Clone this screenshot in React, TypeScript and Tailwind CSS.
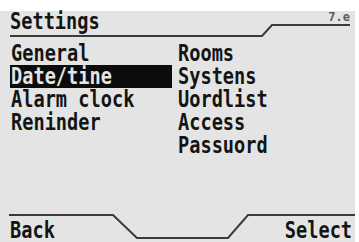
import React from "react";

const left = ["General", "Date/tine", "Alarm clock", "Reninder"];
const right = ["Rooms", "Systens", "Uordlist", "Access", "Passuord"];

function Label({ text, right: alignRight }: { text: string; right?: boolean }) {
    return (
        <span
            className={`block w-max h-[23px] leading-[23px] whitespace-pre scale-x-[0.81] ${alignRight ? "origin-right ml-auto" : "origin-left"}`}
        >
            {text}
        </span>
    );
}

export default function App() {
    return (
        <div
            className="w-[359px] h-[242px] bg-white overflow-hidden text-[#141414] font-bold"
            style={{ fontFamily: '"DejaVu Sans Mono", "Liberation Mono", monospace' }}
        >
            <div className="relative mt-[11px] w-[355px] h-[231px] bg-[#e4e4e4] flex flex-col">
                {/* frame lines */}
                <svg className="absolute left-0 top-0 pointer-events-none" width="355" height="231" viewBox="0 11 355 231">
                    <polyline
                        points="10,36 262,36 272,25 350,25"
                        fill="none"
                        stroke="#3a3a3a"
                        strokeWidth="2"
                    />
                    <polyline
                        points="9,215 113,215 137,238 228,238 248,215 355,215"
                        fill="none"
                        stroke="#3a3a3a"
                        strokeWidth="2"
                    />
                </svg>

                {/* header */}
                <div className="flex justify-between items-start -mt-[1px] pl-[10px] pr-[5px]">
                    <div className="text-[23px]">
                        <Label text="Settings" />
                    </div>
                    <div className="text-[12px] leading-[12px] text-[#5a5a5a] mt-[1px]">7.e</div>
                </div>

                {/* menu */}
                <div className="flex mt-[9px] pl-[10px] text-[23px]">
                    <div className="w-[162px] flex flex-col">
                        {left.map((item) => (
                            <div
                                key={item}
                                className={`h-[23px] pl-[1px] ${item === "Date/tine" ? "bg-[#0c0c0c] text-[#e4e4e4]" : ""}`}
                            >
                                <Label text={item} />
                            </div>
                        ))}
                    </div>
                    <div className="ml-[6px] flex flex-col">
                        {right.map((item) => (
                            <div key={item} className="h-[23px]">
                                <Label text={item} />
                            </div>
                        ))}
                    </div>
                </div>

                {/* soft keys */}
                <div className="mt-auto flex justify-between pl-[10px] pr-[3px] text-[23px]">
                    <Label text="Back" />
                    <Label text="Select" right />
                </div>
            </div>
        </div>
    );
}
